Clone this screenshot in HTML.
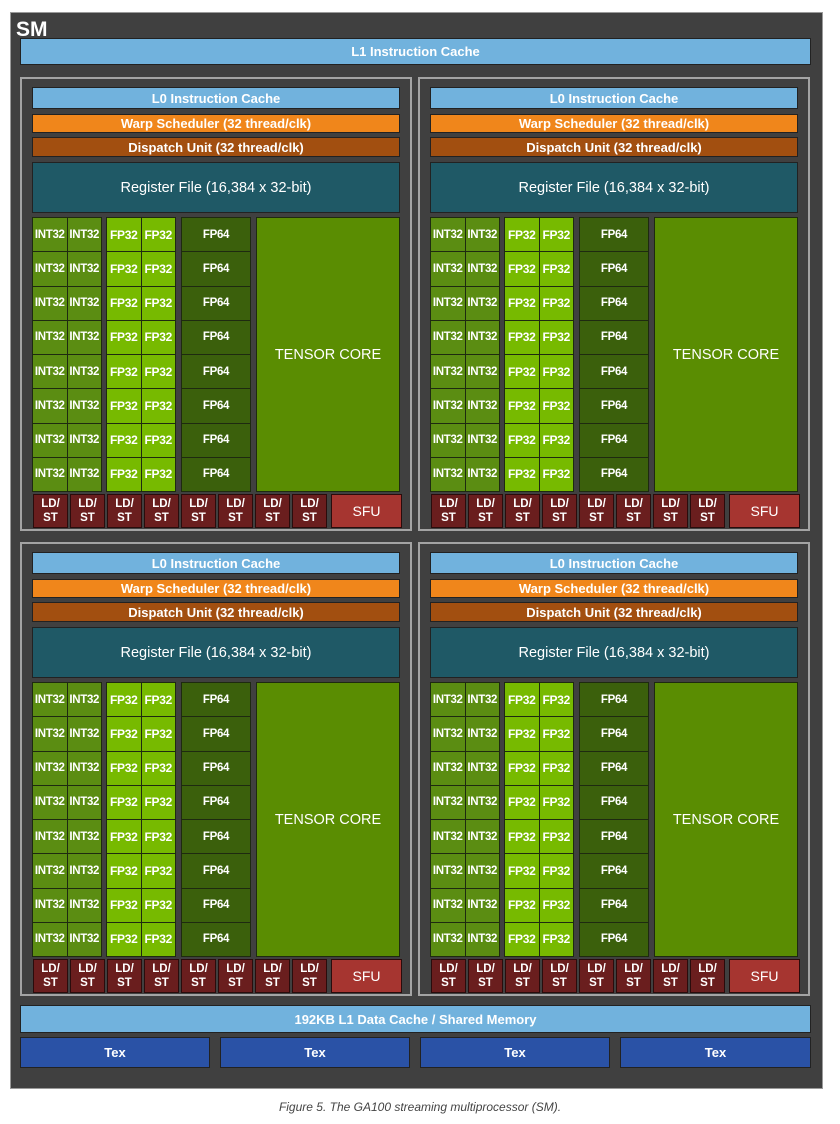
<!DOCTYPE html>
<html><head><meta charset="utf-8"><style>
*{margin:0;padding:0;box-sizing:border-box}
body{width:840px;height:1124px;background:#fff;font-family:"Liberation Sans",Arial,sans-serif;position:relative;overflow:hidden}
.sm{position:absolute;left:10px;top:12px;width:813px;height:1077px;background:#404040;border:1px solid #9a9a9a}
.t{position:absolute;color:#fff;font-weight:bold;display:flex;align-items:center;justify-content:center;text-align:center;border:1px solid #222}
.p{position:absolute;width:392px;height:454px;border:2px solid #a4a4a4;background:#404040}
.l0{left:10px;top:8px;width:368px;height:22px;background:#71b2dd;font-size:13px}
.wa{left:10px;top:35px;width:368px;height:19px;background:#f0861b;font-size:13px}
.di{left:10px;top:58px;width:368px;height:20px;background:#a24f10;font-size:13px}
.rf{left:10px;top:83px;width:368px;height:51px;background:#1f5966;font-size:14.5px;font-weight:normal}
.g{position:absolute;top:138px;width:70px;height:275px;display:grid;grid-template-columns:1fr 1fr;grid-template-rows:repeat(8,1fr);gap:1px;background:#1e2a10;border:1px solid #1e2a10}
.g div{display:flex;align-items:center;justify-content:center;color:#fff;font-weight:bold;font-size:11.5px;letter-spacing:-0.3px}
.int{left:10px}.int div{background:#5b8d12}
.fp{left:84px}.fp div{background:#77ba00;font-size:12px}
.f64{left:159px;grid-template-columns:1fr}.f64 div{background:#3b600c;font-size:11.5px}
.tc{left:234px;top:138px;width:144px;height:275px;background:#5a8d02;font-size:14.5px;font-weight:normal;border:1px solid #1e2a10}
.ls{position:absolute;left:11px;top:415px;width:370px;height:35px;display:flex;gap:2px}
.ls div{width:35px;height:34px;background:#6a1e1e;border:1px solid #2a0c0c;color:#fff;font-weight:bold;font-size:11.5px;line-height:14px;display:flex;align-items:center;justify-content:center;text-align:center}
.ls div.sfu{width:71px;margin-left:2px;background:#a63530;font-size:14px;font-weight:normal}
</style></head><body>
<div class="sm">
<div style="position:absolute;left:5px;top:5px;color:#fff;font-weight:bold;font-size:21px">SM</div>
<div class="t" style="left:9px;top:25px;width:791px;height:27px;background:#71b2dd;font-size:13px">L1 Instruction Cache</div>

<div class="p" style="left:9px;top:64px">
<div class="t l0">L0 Instruction Cache</div><div class="t wa">Warp Scheduler (32 thread/clk)</div><div class="t di">Dispatch Unit (32 thread/clk)</div><div class="t rf">Register File (16,384 x 32-bit)</div>
<div class="g int"><div>INT32</div><div>INT32</div><div>INT32</div><div>INT32</div><div>INT32</div><div>INT32</div><div>INT32</div><div>INT32</div><div>INT32</div><div>INT32</div><div>INT32</div><div>INT32</div><div>INT32</div><div>INT32</div><div>INT32</div><div>INT32</div></div>
<div class="g fp"><div>FP32</div><div>FP32</div><div>FP32</div><div>FP32</div><div>FP32</div><div>FP32</div><div>FP32</div><div>FP32</div><div>FP32</div><div>FP32</div><div>FP32</div><div>FP32</div><div>FP32</div><div>FP32</div><div>FP32</div><div>FP32</div></div>
<div class="g f64"><div>FP64</div><div>FP64</div><div>FP64</div><div>FP64</div><div>FP64</div><div>FP64</div><div>FP64</div><div>FP64</div></div>
<div class="t tc">TENSOR CORE</div>
<div class="ls"><div>LD/<br>ST</div><div>LD/<br>ST</div><div>LD/<br>ST</div><div>LD/<br>ST</div><div>LD/<br>ST</div><div>LD/<br>ST</div><div>LD/<br>ST</div><div>LD/<br>ST</div><div class="sfu">SFU</div></div>
</div>

<div class="p" style="left:407px;top:64px">
<div class="t l0">L0 Instruction Cache</div><div class="t wa">Warp Scheduler (32 thread/clk)</div><div class="t di">Dispatch Unit (32 thread/clk)</div><div class="t rf">Register File (16,384 x 32-bit)</div>
<div class="g int"><div>INT32</div><div>INT32</div><div>INT32</div><div>INT32</div><div>INT32</div><div>INT32</div><div>INT32</div><div>INT32</div><div>INT32</div><div>INT32</div><div>INT32</div><div>INT32</div><div>INT32</div><div>INT32</div><div>INT32</div><div>INT32</div></div>
<div class="g fp"><div>FP32</div><div>FP32</div><div>FP32</div><div>FP32</div><div>FP32</div><div>FP32</div><div>FP32</div><div>FP32</div><div>FP32</div><div>FP32</div><div>FP32</div><div>FP32</div><div>FP32</div><div>FP32</div><div>FP32</div><div>FP32</div></div>
<div class="g f64"><div>FP64</div><div>FP64</div><div>FP64</div><div>FP64</div><div>FP64</div><div>FP64</div><div>FP64</div><div>FP64</div></div>
<div class="t tc">TENSOR CORE</div>
<div class="ls"><div>LD/<br>ST</div><div>LD/<br>ST</div><div>LD/<br>ST</div><div>LD/<br>ST</div><div>LD/<br>ST</div><div>LD/<br>ST</div><div>LD/<br>ST</div><div>LD/<br>ST</div><div class="sfu">SFU</div></div>
</div>

<div class="p" style="left:9px;top:529px">
<div class="t l0">L0 Instruction Cache</div><div class="t wa">Warp Scheduler (32 thread/clk)</div><div class="t di">Dispatch Unit (32 thread/clk)</div><div class="t rf">Register File (16,384 x 32-bit)</div>
<div class="g int"><div>INT32</div><div>INT32</div><div>INT32</div><div>INT32</div><div>INT32</div><div>INT32</div><div>INT32</div><div>INT32</div><div>INT32</div><div>INT32</div><div>INT32</div><div>INT32</div><div>INT32</div><div>INT32</div><div>INT32</div><div>INT32</div></div>
<div class="g fp"><div>FP32</div><div>FP32</div><div>FP32</div><div>FP32</div><div>FP32</div><div>FP32</div><div>FP32</div><div>FP32</div><div>FP32</div><div>FP32</div><div>FP32</div><div>FP32</div><div>FP32</div><div>FP32</div><div>FP32</div><div>FP32</div></div>
<div class="g f64"><div>FP64</div><div>FP64</div><div>FP64</div><div>FP64</div><div>FP64</div><div>FP64</div><div>FP64</div><div>FP64</div></div>
<div class="t tc">TENSOR CORE</div>
<div class="ls"><div>LD/<br>ST</div><div>LD/<br>ST</div><div>LD/<br>ST</div><div>LD/<br>ST</div><div>LD/<br>ST</div><div>LD/<br>ST</div><div>LD/<br>ST</div><div>LD/<br>ST</div><div class="sfu">SFU</div></div>
</div>

<div class="p" style="left:407px;top:529px">
<div class="t l0">L0 Instruction Cache</div><div class="t wa">Warp Scheduler (32 thread/clk)</div><div class="t di">Dispatch Unit (32 thread/clk)</div><div class="t rf">Register File (16,384 x 32-bit)</div>
<div class="g int"><div>INT32</div><div>INT32</div><div>INT32</div><div>INT32</div><div>INT32</div><div>INT32</div><div>INT32</div><div>INT32</div><div>INT32</div><div>INT32</div><div>INT32</div><div>INT32</div><div>INT32</div><div>INT32</div><div>INT32</div><div>INT32</div></div>
<div class="g fp"><div>FP32</div><div>FP32</div><div>FP32</div><div>FP32</div><div>FP32</div><div>FP32</div><div>FP32</div><div>FP32</div><div>FP32</div><div>FP32</div><div>FP32</div><div>FP32</div><div>FP32</div><div>FP32</div><div>FP32</div><div>FP32</div></div>
<div class="g f64"><div>FP64</div><div>FP64</div><div>FP64</div><div>FP64</div><div>FP64</div><div>FP64</div><div>FP64</div><div>FP64</div></div>
<div class="t tc">TENSOR CORE</div>
<div class="ls"><div>LD/<br>ST</div><div>LD/<br>ST</div><div>LD/<br>ST</div><div>LD/<br>ST</div><div>LD/<br>ST</div><div>LD/<br>ST</div><div>LD/<br>ST</div><div>LD/<br>ST</div><div class="sfu">SFU</div></div>
</div>

<div class="t" style="left:9px;top:992px;width:791px;height:28px;background:#71b2dd;font-size:13px">192KB L1 Data Cache / Shared Memory</div>
<div class="t" style="left:9px;top:1024px;width:190px;height:31px;background:#2a52a6;font-size:13px">Tex</div>
<div class="t" style="left:209px;top:1024px;width:190px;height:31px;background:#2a52a6;font-size:13px">Tex</div>
<div class="t" style="left:409px;top:1024px;width:190px;height:31px;background:#2a52a6;font-size:13px">Tex</div>
<div class="t" style="left:609px;top:1024px;width:191px;height:31px;background:#2a52a6;font-size:13px">Tex</div>
</div>
<div style="position:absolute;left:0;width:840px;top:1100px;text-align:center;font-style:italic;font-size:12px;color:#444">Figure 5. The GA100 streaming multiprocessor (SM).</div>
</body></html>
